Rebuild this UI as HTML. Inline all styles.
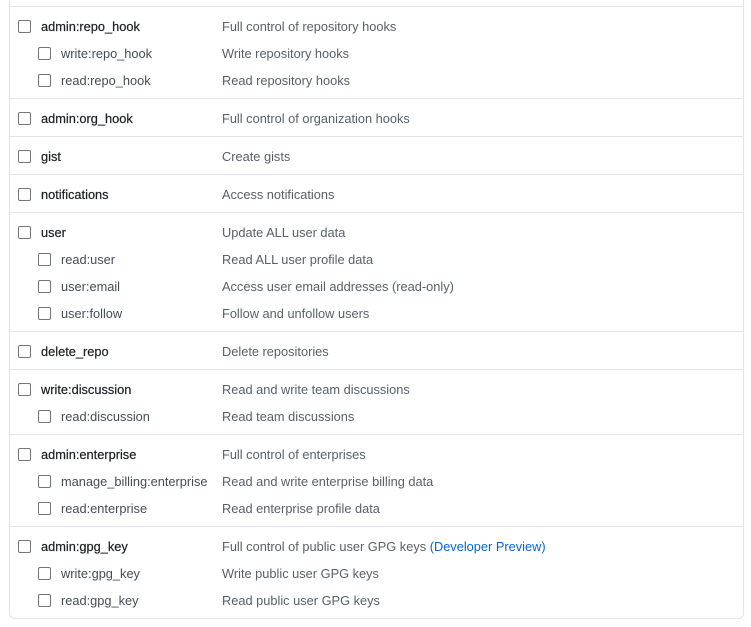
<!DOCTYPE html>
<html><head><meta charset="utf-8"><style>
html,body{margin:0;padding:0;background:#fff;width:751px;height:627px;overflow:hidden;font-family:"Segoe UI","Liberation Sans",sans-serif;font-size:12.8px;}
.box{position:absolute;left:9px;top:-10px;width:735px;height:629px;border:1px solid #e1e4e8;border-radius:0 0 6px 6px;box-sizing:border-box;}
.sep{position:absolute;left:10px;width:733px;height:1px;background:#e1e4e8;}
.cb{position:absolute;width:11px;height:11px;border:1px solid #767676;border-radius:2px;background:#fff;margin-top:1px;}
.t{position:absolute;line-height:16px;white-space:nowrap;margin-top:1px;}
.n{color:#1b1f23;-webkit-text-stroke:0.2px #1b1f23;}
.s{color:#444d56;}
.d{color:#586069;}
a{color:#0366d6;text-decoration:none;}
</style></head><body>
<div class="box"></div>
<div class="sep" style="top:6px"></div>
<div class="sep" style="top:98px"></div>
<div class="sep" style="top:136px"></div>
<div class="sep" style="top:174px"></div>
<div class="sep" style="top:212px"></div>
<div class="sep" style="top:331px"></div>
<div class="sep" style="top:369px"></div>
<div class="sep" style="top:434px"></div>
<div class="sep" style="top:526px"></div>

<div class="cb" style="left:18px;top:19px"></div><div class="t n" style="left:41px;top:18px">admin:repo_hook</div><div class="t d" style="left:222px;top:18px">Full control of repository hooks</div>
<div class="cb" style="left:38px;top:46px"></div><div class="t s" style="left:61px;top:45px">write:repo_hook</div><div class="t d" style="left:222px;top:45px">Write repository hooks</div>
<div class="cb" style="left:38px;top:73px"></div><div class="t s" style="left:61px;top:72px">read:repo_hook</div><div class="t d" style="left:222px;top:72px">Read repository hooks</div>

<div class="cb" style="left:18px;top:111px"></div><div class="t n" style="left:41px;top:110px">admin:org_hook</div><div class="t d" style="left:222px;top:110px">Full control of organization hooks</div>

<div class="cb" style="left:18px;top:149px"></div><div class="t n" style="left:41px;top:148px">gist</div><div class="t d" style="left:222px;top:148px">Create gists</div>

<div class="cb" style="left:18px;top:187px"></div><div class="t n" style="left:41px;top:186px">notifications</div><div class="t d" style="left:222px;top:186px">Access notifications</div>

<div class="cb" style="left:18px;top:225px"></div><div class="t n" style="left:41px;top:224px">user</div><div class="t d" style="left:222px;top:224px">Update ALL user data</div>
<div class="cb" style="left:38px;top:252px"></div><div class="t s" style="left:61px;top:251px">read:user</div><div class="t d" style="left:222px;top:251px">Read ALL user profile data</div>
<div class="cb" style="left:38px;top:279px"></div><div class="t s" style="left:61px;top:278px">user:email</div><div class="t d" style="left:222px;top:278px">Access user email addresses (read-only)</div>
<div class="cb" style="left:38px;top:306px"></div><div class="t s" style="left:61px;top:305px">user:follow</div><div class="t d" style="left:222px;top:305px">Follow and unfollow users</div>

<div class="cb" style="left:18px;top:344px"></div><div class="t n" style="left:41px;top:343px">delete_repo</div><div class="t d" style="left:222px;top:343px">Delete repositories</div>

<div class="cb" style="left:18px;top:382px"></div><div class="t n" style="left:41px;top:381px">write:discussion</div><div class="t d" style="left:222px;top:381px">Read and write team discussions</div>
<div class="cb" style="left:38px;top:409px"></div><div class="t s" style="left:61px;top:408px">read:discussion</div><div class="t d" style="left:222px;top:408px">Read team discussions</div>

<div class="cb" style="left:18px;top:447px"></div><div class="t n" style="left:41px;top:446px">admin:enterprise</div><div class="t d" style="left:222px;top:446px">Full control of enterprises</div>
<div class="cb" style="left:38px;top:474px"></div><div class="t s" style="left:61px;top:473px">manage_billing:enterprise</div><div class="t d" style="left:222px;top:473px">Read and write enterprise billing data</div>
<div class="cb" style="left:38px;top:501px"></div><div class="t s" style="left:61px;top:500px">read:enterprise</div><div class="t d" style="left:222px;top:500px">Read enterprise profile data</div>

<div class="cb" style="left:18px;top:539px"></div><div class="t n" style="left:41px;top:538px">admin:gpg_key</div><div class="t d" style="left:222px;top:538px">Full control of public user GPG keys <a>(Developer Preview)</a></div>
<div class="cb" style="left:38px;top:566px"></div><div class="t s" style="left:61px;top:565px">write:gpg_key</div><div class="t d" style="left:222px;top:565px">Write public user GPG keys</div>
<div class="cb" style="left:38px;top:593px"></div><div class="t s" style="left:61px;top:592px">read:gpg_key</div><div class="t d" style="left:222px;top:592px">Read public user GPG keys</div>
</body></html>
